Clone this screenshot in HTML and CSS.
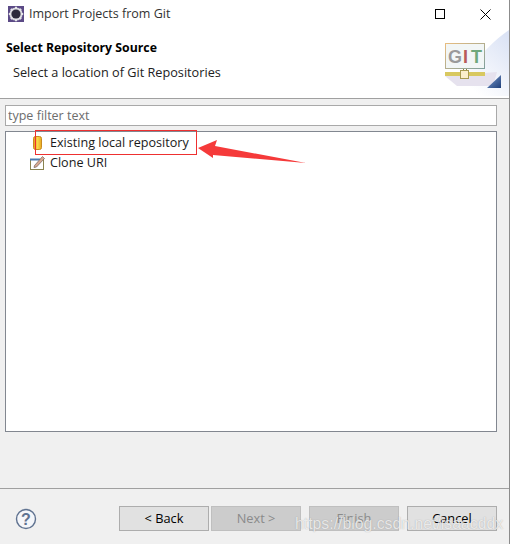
FILE: index.html
```html
<!DOCTYPE html>
<html lang="en">
<head>
  <meta charset="UTF-8" />
  <title>Import Projects from Git</title>
  <link rel="stylesheet" href="styles.css">
</head>
<body>

  <div class="window">
    <!-- title bar -->
    <div class="titlebar">
      <svg class="app-icon" width="16" height="16" viewBox="0 0 16 16">
        <rect x="0" y="0" width="16" height="16" fill="#5b4a86"/>
        <circle cx="8" cy="8" r="6.6" fill="#d8d8de"/>
        <path d="M8 0.8v2.4M8 12.8v2.4M0.8 8h2.4M12.8 8h2.4M2.9 2.9l1.7 1.7M11.4 11.4l1.7 1.7M13.1 2.9l-1.7 1.7M4.6 11.4l-1.7 1.7" stroke="#e6e6ea" stroke-width="2"/>
        <circle cx="8" cy="8" r="4.6" fill="#2c2a3c"/>
      </svg>
      <span class="title-text">Import Projects from Git</span>
      <div class="win-controls">
        <svg width="10" height="10" viewBox="0 0 10 10"><rect x="0.5" y="0.5" width="9" height="9" fill="none" stroke="#000"/></svg>
        <svg width="11" height="11" viewBox="0 0 11 11"><path d="M0.5 0.5l10 10M10.5 0.5l-10 10" stroke="#000" fill="none"/></svg>
      </div>
    </div>

    <!-- banner -->
    <div class="banner">
      <div class="banner-text">
        <h2>Select Repository Source</h2>
        <p>Select a location of Git Repositories</p>
      </div>
      <div class="banner-art">
        <svg width="74" height="68" viewBox="0 0 74 68">
          <defs>
            <linearGradient id="glow" x1="0.35" y1="0.75" x2="1" y2="0.1">
              <stop offset="0" stop-color="#ffffff"/>
              <stop offset="1" stop-color="#dbe3f5"/>
            </linearGradient>
            <linearGradient id="tri" x1="0" y1="0" x2="1" y2="1">
              <stop offset="0" stop-color="#7f9fd0"/>
              <stop offset="1" stop-color="#1f3f7a"/>
            </linearGradient>
            <linearGradient id="frame" x1="0" y1="0" x2="1" y2="1">
              <stop offset="0" stop-color="#e8bd80"/>
              <stop offset="1" stop-color="#7f9f9c"/>
            </linearGradient>
          </defs>
          <path d="M0 66C24 58 44 20 74 0V66Z" fill="url(#glow)"/>
          <path d="M10 46L62 42L58 56L22 56Z" fill="#e6e2ee"/>
          <rect x="10.500" y="13.500" width="39" height="25" fill="#f2f6f6" stroke="url(#frame)"/>
          <text x="13" y="33" class="git-text git-g">G</text>
          <text x="28" y="33" class="git-text git-i">I</text>
          <text x="36" y="33" class="git-text git-t">T</text>
          <rect x="10" y="42" width="40" height="4" fill="#d8c860"/>
          <rect x="28" y="39" width="1" height="3" fill="#8a8440"/>
          <rect x="31" y="39" width="1" height="3" fill="#8a8440"/>
          <rect x="25.500" y="40.500" width="8" height="8" fill="#fbeecb" stroke="#a89a50"/>
          <path d="M52 58L66 45V58Z" fill="url(#tri)"/>
        </svg>
      </div>
    </div>

    <!-- content -->
    <div class="content">
      <input class="filter" type="text" placeholder="type filter text" />
      <ul class="tree">
        <li class="tree-row">
          <svg width="16" height="16" viewBox="0 0 16 16">
            <defs>
              <linearGradient id="repo" x1="0" y1="0" x2="1" y2="0">
                <stop offset="0" stop-color="#e8941c"/>
                <stop offset="0.5" stop-color="#f8d84a"/>
                <stop offset="1" stop-color="#e8a820"/>
              </linearGradient>
            </defs>
            <rect x="4.500" y="1.500" width="8" height="13" rx="2" fill="url(#repo)" stroke="#c98a20"/>
          </svg>
          <span>Existing local repository</span>
        </li>
        <li class="tree-row">
          <svg width="16" height="16" viewBox="0 0 16 16">
            <rect x="1.500" y="5.500" width="13" height="10" fill="#fff" stroke="#8a8450"/>
            <path d="M1 5.500h10" stroke="#4a7ab0" stroke-width="2"/>
            <path d="M5.500 11.500L13.500 2.500L15.500 4.500L7.500 13L5 13.500Z" fill="#d8a890" stroke="#70605a" stroke-width="0.700"/>
          </svg>
          <span>Clone URI</span>
        </li>
      </ul>
    </div>

    <!-- footer -->
    <div class="footer">
      <svg class="help" width="22" height="22" viewBox="0 0 22 22">
        <circle cx="11" cy="11" r="9.500" fill="#f4f6fa" stroke="#5f7290" stroke-width="1.400"/>
        <text x="11" y="16.500" class="help-mark">?</text>
      </svg>
      <div class="buttons">
        <button class="btn">&lt; Back</button>
        <button class="btn btn-off">Next &gt;</button>
        <button class="btn btn-off btn-finish">Finish</button>
        <button class="btn btn-cancel">Cancel</button>
      </div>
    </div>
  </div>

  <!-- annotation drawn on top of the screenshot -->
  <div class="mark-box"></div>
  <svg class="mark-arrow" width="110" height="30" viewBox="0 0 110 30">
    <path d="M0 9L19 1L17 7L108 24L15 16L15 19Z" fill="#f53a3a"/>
  </svg>
  <div class="watermark">https://blog.csdn.net/isaacddx</div>

</body>
</html>
```

FILE: styles.css
```css
/* ===== page ===== */
html, body {
  margin: 0;
  height: 544px;
  overflow: hidden;
}

body {
  position: relative;
  width: 513px;
  background-color: #fff;
  font-family: "Open Sans", "Noto Sans", sans-serif;
  font-size: 12px;
  color: #000;
}

.window {
  box-sizing: border-box;
  width: 510px;
  height: 544px;
  border-right: 1px solid #8c8c8c;
  background-color: #f0f0f0;
  display: flex;
  flex-direction: column;
}

/* ===== title bar ===== */
.titlebar {
  height: 28px;
  padding-left: 8px;
  background-color: #fff;
  display: flex;
  align-items: center;
  box-sizing: border-box;
}

.app-icon {
  flex-shrink: 0;
}

.title-text {
  margin: -2px 0 0 5px;
  font-size: 12.500px;
  color: #333;
}

.win-controls {
  margin-left: auto;
  margin-right: 18px;
  display: flex;
  align-items: center;
  gap: 35px;
}

/* ===== banner ===== */
.banner {
  height: 70px;
  background-color: #fff;
  border-bottom: 1px solid #a0a0a0;
  display: flex;
  justify-content: space-between;
  position: relative;
}

.banner h2 {
  margin: 12px 0 0 6px;
  font-size: 12.300px;
  line-height: 16px;
  font-weight: 700;
}

.banner p {
  margin: 8px 0 0 13px;
  font-size: 12.700px;
  line-height: 16px;
  color: #222;
}

.banner-art {
  align-self: flex-end;
  line-height: 0;
}

.git-text {
  font-family: "Liberation Sans", sans-serif;
  font-size: 18px;
  font-weight: 700;
}

.git-g { fill: #9a9a9a; }
.git-i { fill: #b85a5a; }
.git-t { fill: #6fa87c; }

/* ===== filter + tree ===== */
.content {
  padding: 6px 12px 0 5px;
  display: flex;
  flex-direction: column;
  gap: 5px;
}

.filter {
  box-sizing: border-box;
  width: 100%;
  height: 21px;
  padding: 0 2px;
  border: 1px solid #a9a9a9;
  background-color: #fff;
  font-family: inherit;
  font-size: 12.500px;
}

.filter::placeholder {
  color: #6d6d6d;
  opacity: 1;
}

.tree {
  box-sizing: border-box;
  height: 301px;
  margin: 0;
  padding: 1px 0 0 23px;
  list-style: none;
  background-color: #fff;
  border: 1px solid #828790;
}

.tree-row {
  height: 20px;
  display: flex;
  align-items: center;
  gap: 5px;
  font-size: 12.600px;
  color: #1a1a1a;
}

.tree-row:first-child {
  height: 19px;
}

/* ===== footer ===== */
.footer {
  margin-top: 56px;
  border-top: 1px solid #a0a0a0;
  padding: 17px 12px 0 15px;
  display: flex;
  align-items: center;
  justify-content: space-between;
}

.help-mark {
  font-family: "Liberation Sans", sans-serif;
  font-size: 16px;
  font-weight: 700;
  fill: #5f7290;
  text-anchor: middle;
}

.buttons {
  display: flex;
  gap: 2px;
}

.btn {
  box-sizing: border-box;
  width: 90px;
  height: 25px;
  padding: 0 0 2px;
  border: 1px solid #adadad;
  background-color: #e1e1e1;
  font-family: inherit;
  font-size: 12.800px;
  color: #000;
}

.btn-off {
  background-color: #cccccc;
  border-color: #bfbfbf;
  color: #8a8a8a;
}

.btn-finish,
.btn-cancel {
  margin-left: 6px;
}

/* ===== annotation ===== */
.mark-box {
  position: absolute;
  left: 35px;
  top: 130px;
  width: 160px;
  height: 23px;
  border: 1px solid #ee3030;
}

.mark-arrow {
  position: absolute;
  left: 198px;
  top: 139px;
}

.watermark {
  position: absolute;
  left: 295px;
  top: 515px;
  font-family: "Liberation Sans", sans-serif;
  font-size: 15.800px;
  color: rgba(255, 255, 255, 0.75);
  text-shadow: 0 0 1px rgba(100, 100, 100, 0.5);
  white-space: nowrap;
}
```
